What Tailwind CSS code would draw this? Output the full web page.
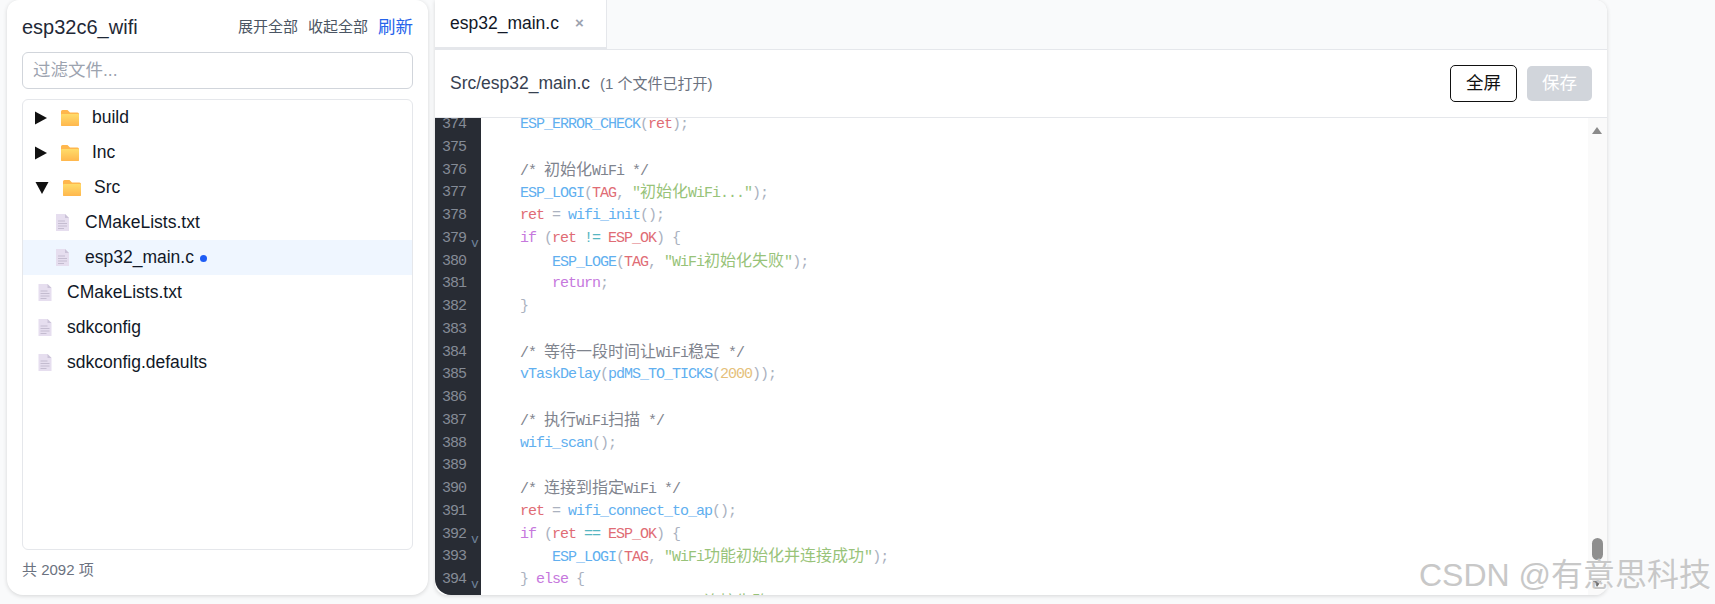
<!DOCTYPE html>
<html lang="zh-CN">
<head>
  <meta charset="UTF-8" />
  <title>esp32c6_wifi</title>
  <script src="https://cdn.jsdelivr.net/npm/@tailwindcss/browser@4"></script>
</head>
<body class="bg-[#f9fafb] text-[#111827] font-['Liberation_Sans','Noto_Sans_CJK_SC',sans-serif] overflow-hidden">
  <svg class="absolute w-0 h-0"><defs><linearGradient id="fold" x1="0" y1="0" x2="0" y2="1"><stop offset="0" stop-color="#ffdc6a"/><stop offset="1" stop-color="#ffb74d"/></linearGradient></defs></svg>
  <div class="relative w-[1715px] h-[604px] flex gap-[7px] pl-[7px]">

    <!-- LEFT: file tree -->
    <aside class="w-[421px] h-[595px] bg-white rounded-b-2xl rounded-t-xl shadow-[0_1px_4px_rgba(0,0,0,0.15)] px-[15px] flex flex-col">
      <div class="h-[52px] flex items-center justify-between pt-[2px]">
        <h1 class="text-[20px] text-[#1f2937]">esp32c6_wifi</h1>
        <div class="flex items-center gap-[10px]">
          <button class="text-[15px] text-[#4b5563]">展开全部</button>
          <button class="text-[15px] text-[#4b5563]">收起全部</button>
          <button class="text-[17.5px] text-[#2563eb]">刷新</button>
        </div>
      </div>
      <input placeholder="过滤文件..." class="h-[37px] w-full border border-[#d1d5db] rounded-md px-[10px] text-[17.5px] placeholder:text-[#9ca3af]" />

      <div class="mt-[10px] h-[451px] border border-[#e5e7eb] rounded-md text-[17.5px] text-[#111827]">
        <!-- folders -->
        <div class="h-[35px] flex items-center pl-[11px]">
          <svg class="w-[14px] h-[14px]" viewBox="0 0 14 14"><polygon points="1,0.5 13,7 1,13.5" fill="#111"/></svg>
          <svg class="w-[18px] h-[16px] ml-[13px]" viewBox="0 0 18 16"><path d="M0 1.5Q0 0 1.5 0H6.5L9 2.5H16.5Q18 2.5 18 4V14.5Q18 16 16.500 16H1.500Q0 16 0 14.500Z" fill="#ffb74d"/><rect x="0" y="4" width="18" height="12" rx="1" fill="url(#fold)"/></svg>
          <span class="ml-[13px]">build</span>
        </div>
        <div class="h-[35px] flex items-center pl-[11px]">
          <svg class="w-[14px] h-[14px]" viewBox="0 0 14 14"><polygon points="1,0.5 13,7 1,13.5" fill="#111"/></svg>
          <svg class="w-[18px] h-[16px] ml-[13px]" viewBox="0 0 18 16"><path d="M0 1.5Q0 0 1.5 0H6.5L9 2.5H16.5Q18 2.5 18 4V14.5Q18 16 16.500 16H1.500Q0 16 0 14.500Z" fill="#ffb74d"/><rect x="0" y="4" width="18" height="12" rx="1" fill="url(#fold)"/></svg>
          <span class="ml-[13px]">Inc</span>
        </div>
        <div class="h-[35px] flex items-center pl-[12px]">
          <svg class="w-[14px] h-[14px]" viewBox="0 0 14 14"><polygon points="0.5,1 13.500,1 7,13" fill="#111"/></svg>
          <svg class="w-[18px] h-[16px] ml-[14px]" viewBox="0 0 18 16"><path d="M0 1.5Q0 0 1.5 0H6.5L9 2.5H16.5Q18 2.5 18 4V14.5Q18 16 16.500 16H1.500Q0 16 0 14.500Z" fill="#ffb74d"/><rect x="0" y="4" width="18" height="12" rx="1" fill="url(#fold)"/></svg>
          <span class="ml-[13px]">Src</span>
        </div>
        <!-- files in Src -->
        <div class="h-[35px] flex items-center pl-[33px]">
          <svg class="w-[13px] h-[17px]" viewBox="0 0 13 17"><path d="M0 0H9L13 4V17H0Z" fill="#e6deef"/><path d="M9 0L13 4H9Z" fill="#cbc3d8"/><path d="M2 7H9M2 9.500H11M2 12H11M2 14.500H8" stroke="#c4bcd0" stroke-width="1"/></svg>
          <span class="ml-[16px]">CMakeLists.txt</span>
        </div>
        <div class="h-[35px] flex items-center pl-[33px] bg-[#eff6ff]">
          <svg class="w-[13px] h-[17px]" viewBox="0 0 13 17"><path d="M0 0H9L13 4V17H0Z" fill="#e6deef"/><path d="M9 0L13 4H9Z" fill="#cbc3d8"/><path d="M2 7H9M2 9.500H11M2 12H11M2 14.500H8" stroke="#c4bcd0" stroke-width="1"/></svg>
          <span class="ml-[16px]">esp32_main.c</span>
          <span class="ml-[6px] mt-[2px] w-[7px] h-[7px] rounded-full bg-[#1d5cf5]"></span>
        </div>
        <!-- root files -->
        <div class="h-[35px] flex items-center pl-[15px]">
          <svg class="w-[14px] h-[17px]" viewBox="0 0 13 17"><path d="M0 0H9L13 4V17H0Z" fill="#e6deef"/><path d="M9 0L13 4H9Z" fill="#cbc3d8"/><path d="M2 7H9M2 9.500H11M2 12H11M2 14.500H8" stroke="#c4bcd0" stroke-width="1"/></svg>
          <span class="ml-[15px]">CMakeLists.txt</span>
        </div>
        <div class="h-[35px] flex items-center pl-[15px]">
          <svg class="w-[14px] h-[17px]" viewBox="0 0 13 17"><path d="M0 0H9L13 4V17H0Z" fill="#e6deef"/><path d="M9 0L13 4H9Z" fill="#cbc3d8"/><path d="M2 7H9M2 9.500H11M2 12H11M2 14.500H8" stroke="#c4bcd0" stroke-width="1"/></svg>
          <span class="ml-[15px]">sdkconfig</span>
        </div>
        <div class="h-[35px] flex items-center pl-[15px]">
          <svg class="w-[14px] h-[17px]" viewBox="0 0 13 17"><path d="M0 0H9L13 4V17H0Z" fill="#e6deef"/><path d="M9 0L13 4H9Z" fill="#cbc3d8"/><path d="M2 7H9M2 9.500H11M2 12H11M2 14.500H8" stroke="#c4bcd0" stroke-width="1"/></svg>
          <span class="ml-[15px]">sdkconfig.defaults</span>
        </div>
      </div>
      <p class="mt-[9px] text-[15px] text-[#6b7280]">共 2092 项</p>
    </aside>

    <!-- RIGHT: editor -->
    <main class="w-[1172px] h-[595px] bg-white rounded-b-xl rounded-tr-xl shadow-[0_1px_4px_rgba(0,0,0,0.15)] flex flex-col overflow-hidden">
      <div class="h-[50px] shrink-0 bg-[#f9fafb] border-b border-[#e5e7eb] flex">
        <div class="w-[172px] h-[49px] bg-white border-r border-b-2 border-[#e5e7eb] flex items-center pl-[15px] text-[17.5px] text-[#111827]">
          esp32_main.c
          <span class="ml-[16px] text-[15px] font-bold text-[#9ca3af]">×</span>
        </div>
      </div>
      <div class="h-[68px] shrink-0 border-b border-[#e5e7eb] flex items-center justify-between pl-[15px] pr-[15px]">
        <div class="flex items-baseline gap-[10px]">
          <span class="text-[17.5px] text-[#374151]">Src/esp32_main.c</span>
          <span class="text-[15px] text-[#6b7280]">(1 个文件已打开)</span>
        </div>
        <div class="flex items-center gap-[10px]">
          <button class="w-[67px] h-[37px] border border-[#111] rounded-[5px] text-[17.5px] text-[#111]">全屏</button>
          <button class="w-[65px] h-[35px] bg-[#d1d5db] rounded-[5px] text-[17.5px] text-white">保存</button>
        </div>
      </div>

      <div class="relative flex-1 flex overflow-hidden rounded-bl-2xl font-['Liberation_Mono','Noto_Sans_CJK_SC',monospace] text-[15px] tracking-[-1px] leading-[22.75px]">
        <!-- gutter -->
        <div class="w-[46px] shrink-0 bg-[#282c34] text-[#858b96] pl-[7px] overflow-hidden">
          <div class="-mt-[4px] [&>div]:h-[22.75px]">
            <div>374</div><div>375</div><div>376</div><div>377</div><div>378</div>
            <div class="flex">379<span class="ml-[5px] mt-[5px] text-[13px] text-[#6f8299]">v</span></div>
            <div>380</div><div>381</div><div>382</div><div>383</div><div>384</div><div>385</div><div>386</div><div>387</div><div>388</div><div>389</div><div>390</div><div>391</div>
            <div class="flex">392<span class="ml-[5px] mt-[5px] text-[13px] text-[#6f8299]">v</span></div>
            <div>393</div>
            <div class="flex">394<span class="ml-[5px] mt-[5px] text-[13px] text-[#6f8299]">v</span></div>
          </div>
        </div>
        <!-- code -->
        <pre class="font-['Liberation_Mono','Noto_Sans_CJK_SC',monospace] -mt-[4px] pl-[39px] text-[#abb2bf] [&>div]:h-[22.75px] [&_b]:font-normal [&_b]:text-[16px] [&_b]:tracking-normal"><div><span class="text-[#61afef]">ESP_ERROR_CHECK</span>(<span class="text-[#e06c75]">ret</span>);</div><div> </div><div><span class="text-[#7f848e]">/* <b>初始化</b>WiFi */</span></div><div><span class="text-[#61afef]">ESP_LOGI</span>(<span class="text-[#e06c75]">TAG</span>, <span class="text-[#98c379]">"<b>初始化</b>WiFi..."</span>);</div><div><span class="text-[#e06c75]">ret</span> = <span class="text-[#61afef]">wifi_init</span>();</div><div><span class="text-[#c678dd]">if</span> (<span class="text-[#e06c75]">ret</span> <span class="text-[#56b6c2]">!=</span> <span class="text-[#e06c75]">ESP_OK</span>) {</div><div>    <span class="text-[#61afef]">ESP_LOGE</span>(<span class="text-[#e06c75]">TAG</span>, <span class="text-[#98c379]">"WiFi<b>初始化失败</b>"</span>);</div><div>    <span class="text-[#c678dd]">return</span>;</div><div>}</div><div> </div><div><span class="text-[#7f848e]">/* <b>等待一段时间让</b>WiFi<b>稳定</b> */</span></div><div><span class="text-[#61afef]">vTaskDelay</span>(<span class="text-[#61afef]">pdMS_TO_TICKS</span>(<span class="text-[#e5c07b]">2000</span>));</div><div> </div><div><span class="text-[#7f848e]">/* <b>执行</b>WiFi<b>扫描</b> */</span></div><div><span class="text-[#61afef]">wifi_scan</span>();</div><div> </div><div><span class="text-[#7f848e]">/* <b>连接到指定</b>WiFi */</span></div><div><span class="text-[#e06c75]">ret</span> = <span class="text-[#61afef]">wifi_connect_to_ap</span>();</div><div><span class="text-[#c678dd]">if</span> (<span class="text-[#e06c75]">ret</span> <span class="text-[#56b6c2]">==</span> <span class="text-[#e06c75]">ESP_OK</span>) {</div><div>    <span class="text-[#61afef]">ESP_LOGI</span>(<span class="text-[#e06c75]">TAG</span>, <span class="text-[#98c379]">"WiFi<b>功能初始化并连接成功</b>"</span>);</div><div>} <span class="text-[#c678dd]">else</span> {</div><div>    <span class="text-[#61afef]">ESP_LOGE</span>(<span class="text-[#e06c75]">TAG</span>, <span class="text-[#98c379]">"WiFi<b>连接失败</b>"</span>);</div></pre>
        <!-- scrollbar -->
        <div class="absolute right-0 top-0 bottom-0 w-[19px] bg-[#fafafa]">
          <svg class="absolute left-[4px] top-[9px] w-[10px] h-[7px]" viewBox="0 0 10 7"><polygon points="5,0 10,7 0,7" fill="#8a8a8a"/></svg>
          <div class="absolute left-[4px] top-[420px] w-[11px] h-[22px] rounded-md bg-[#8f8f8f]"></div>
          <svg class="absolute left-[4px] top-[462px] w-[10px] h-[7px]" viewBox="0 0 10 7"><polygon points="0,0 10,0 5,7" fill="#6b6b6b"/></svg>
        </div>
      </div>
    </main>

    <!-- watermark -->
    <div class="absolute left-[1419px] top-[555px] text-[32px] leading-[40px] text-[#c8c8c8] whitespace-nowrap [text-shadow:1px_1px_1px_rgba(255,255,255,0.9)]">CSDN @有意思科技</div>
  </div>
</body>
</html>
